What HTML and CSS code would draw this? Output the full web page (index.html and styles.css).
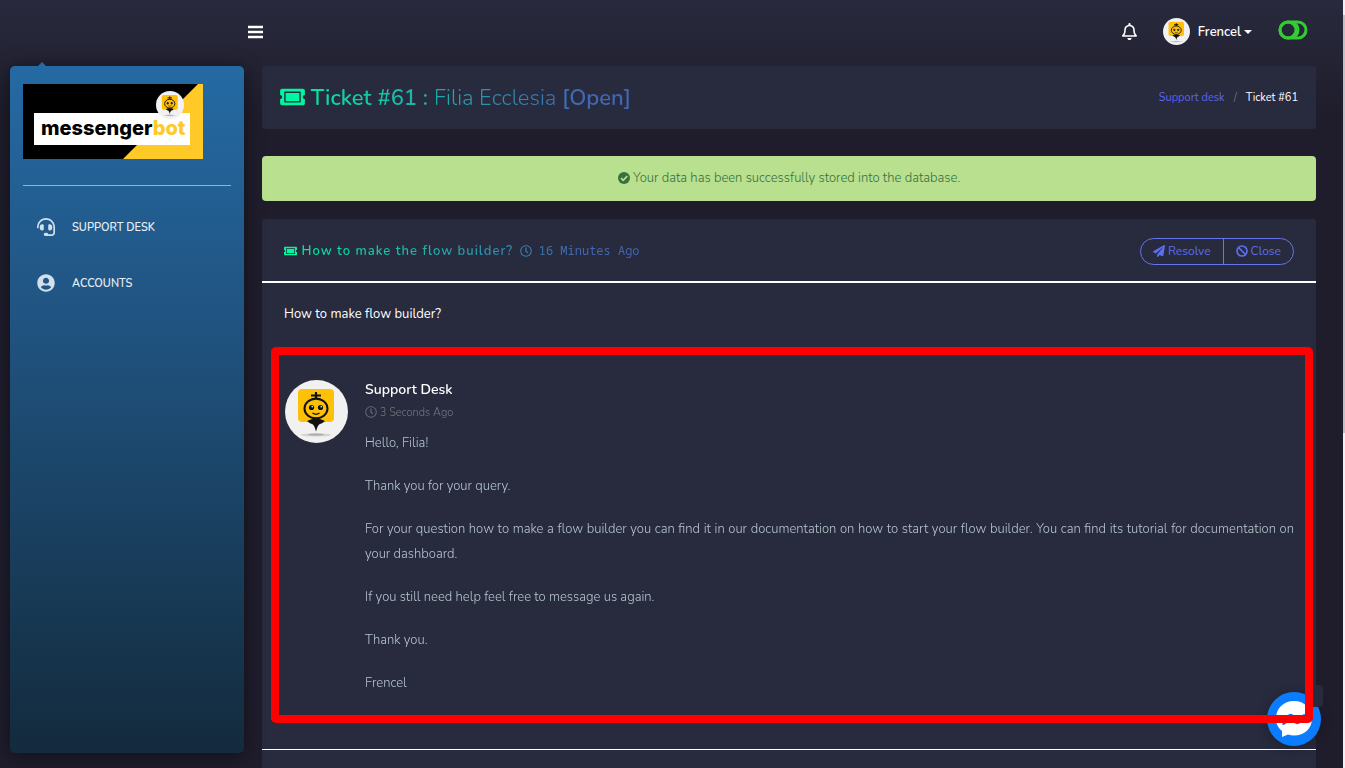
FILE: index.html
```html
<!DOCTYPE html>
<html lang="en">
<head>
    <meta charset="UTF-8">
    <meta name="viewport" content="width=device-width, initial-scale=1.0">
    <title>Ticket #61</title>
    <link rel="stylesheet" href="styles.css">
</head>
<body>
    <!-- shared shapes -->
    <svg class="defs" aria-hidden="true">
        <symbol id="bot" viewBox="0 0 63 63">
            <circle cx="31.5" cy="31.5" r="31.5" fill="#f1f1f2"/>
            <ellipse cx="31" cy="55" rx="15" ry="1.6" fill="#d4d4d4"/>
            <ellipse cx="31" cy="54.5" rx="8" ry="1" fill="#aaa"/>
            <rect x="13" y="9" width="36" height="33" rx="4" fill="#ffc107"/>
            <path d="M31 12v7M26 15.500h10" stroke="#111" stroke-width="2.200" fill="none"/>
            <path d="M25 19.500q6-4 12 0z" fill="#111"/>
            <ellipse cx="31" cy="28.500" rx="11.500" ry="9.800" fill="#ffc107" stroke="#111" stroke-width="2"/>
            <circle cx="26.500" cy="27.500" r="2.600" fill="#111"/>
            <circle cx="35.500" cy="27.500" r="2.600" fill="#111"/>
            <circle cx="27.200" cy="26.800" r=".8" fill="#fff"/>
            <circle cx="36.200" cy="26.800" r=".8" fill="#fff"/>
            <path d="M27.500 33q3.500 2.600 7 0" stroke="#111" stroke-width="1.300" fill="none"/>
            <path d="M22 41q4-2.500 9-2.500t9 2.500q-3 3-6 3.500-2 2-3 7-1-5-3-7-3-.5-6-3.500z" fill="#111"/>
        </symbol>
        <symbol id="ticket" viewBox="0 0 576 512">
            <path d="M128 160h320v192H128V160zm400 96c0 26.510 21.490 48 48 48v96c0 26.510-21.490 48-48 48H48c-26.510 0-48-21.490-48-48v-96c26.510 0 48-21.490 48-48s-21.490-48-48-48v-96c0-26.510 21.490-48 48-48h480c26.510 0 48 21.490 48 48v96c-26.510 0-48 21.490-48 48zm-48-104c0-13.255-10.745-24-24-24H120c-13.255 0-24 10.745-24 24v208c0 13.255 10.745 24 24 24h336c13.255 0 24-10.745 24-24V152z"/>
        </symbol>
        <symbol id="clock" viewBox="0 0 512 512">
            <path d="M256 8C119 8 8 119 8 256s111 248 248 248 248-111 248-248S393 8 256 8zm0 448c-110.500 0-200-89.500-200-200S145.500 56 256 56s200 89.500 200 200-89.500 200-200 200zm61.800-104.400l-84.900-61.700c-3.100-2.300-4.900-5.900-4.900-9.700V116c0-6.600 5.400-12 12-12h32c6.600 0 12 5.400 12 12v141.700l66.800 48.600c5.400 3.900 6.500 11.400 2.600 16.800L334.600 349c-3.900 5.300-11.400 6.500-16.800 2.600z"/>
        </symbol>
    </svg>

    <div class="page">
        <aside class="sidebar">
            <a class="logo" href="#" aria-label="messengerbot">
                <svg width="180" height="75" viewBox="0 0 180 75">
                    <path d="M0 0h180v75H0z"/>
                    <path d="M175 0h5v75h-80z" fill="#ffc928"/>
                    <path d="M11 29h156v32H11z" fill="#fff"/>
                    <text class="logo-text" x="18" y="51">messenger<tspan fill="#ffc928">bot</tspan></text>
                    <use href="#bot" x="133" y="7" width="28" height="28"/>
                </svg>
            </a>
            <nav class="menu">
                <a href="#">
                    <svg class="menu-icon" viewBox="0 0 512 512"><path d="M192 208c0-17.670-14.330-32-32-32h-16c-35.350 0-64 28.650-64 64v48c0 35.350 28.650 64 64 64h16c17.670 0 32-14.330 32-32V208zm176 144c35.350 0 64-28.650 64-64v-48c0-35.350-28.650-64-64-64h-16c-17.670 0-32 14.330-32 32v112c0 17.670 14.330 32 32 32h16zM256 0C113.180 0 4.580 118.830 0 256v16c0 8.840 7.160 16 16 16h16c8.840 0 16-7.160 16-16v-16c0-114.690 93.310-208 208-208s208 93.310 208 208h-.12c.08 2.430.12 165.720.12 165.720 0 23.350-18.930 42.280-42.280 42.280H320c0-26.510-21.490-48-48-48h-32c-26.510 0-48 21.490-48 48s21.490 48 48 48h181.720c49.860 0 90.280-40.420 90.280-90.280V256C507.420 118.830 398.820 0 256 0z"/></svg>
                    <span>SUPPORT DESK</span>
                </a>
                <a href="#">
                    <svg class="menu-icon" viewBox="0 0 496 512"><path d="M248 8C111 8 0 119 0 256s111 248 248 248 248-111 248-248S385 8 248 8zm0 96c48.600 0 88 39.400 88 88s-39.400 88-88 88-88-39.400-88-88 39.400-88 88-88zm0 344c-58.700 0-111.300-26.600-146.500-68.200 18.800-35.400 55.600-59.800 98.500-59.800 2.400 0 4.800.4 7.100 1.100 13 4.200 26.600 6.900 40.900 6.900s28-2.700 40.900-6.900c2.300-.7 4.700-1.100 7.100-1.100 42.900 0 79.700 24.400 98.500 59.800C359.300 421.400 306.700 448 248 448z"/></svg>
                    <span>ACCOUNTS</span>
                </a>
            </nav>
        </aside>

        <main class="content">
            <header class="topbar">
                <button class="icon-btn" type="button" aria-label="Toggle menu">
                    <svg width="16" height="16" viewBox="0 0 16 16"><path d="M1 3h15M1 8h15M1 13h15" stroke="#fff" stroke-width="2.600"/></svg>
                </button>
                <div class="topbar-right">
                    <button class="icon-btn" type="button" aria-label="Notifications">
                        <svg width="15" height="17" viewBox="0 0 448 512" fill="#fff"><path d="M439.390 362.290c-19.320-20.760-55.470-51.990-55.470-154.290 0-77.700-54.480-139.900-127.940-155.160V32c0-17.670-14.320-32-31.980-32s-31.980 14.330-31.980 32v20.840C118.560 68.100 64.080 130.300 64.080 208c0 102.300-36.150 133.530-55.470 154.290-6 6.450-8.660 14.160-8.610 21.710.11 16.400 12.980 32 32.100 32h383.800c19.120 0 32-15.600 32.100-32 .05-7.550-2.610-15.270-8.610-21.710zM67.530 368c21.220-27.970 44.420-74.330 44.530-159.420 0-.2-.06-.38-.06-.58 0-61.860 50.140-112 112-112s112 50.140 112 112c0 .2-.06.380-.06.58.11 85.100 23.310 131.460 44.530 159.420H67.530zM224 512c35.320 0 63.970-28.650 63.970-64H160.030c0 35.350 28.650 64 63.970 64z"/></svg>
                    </button>
                    <button class="user" type="button">
                        <svg width="27" height="27"><use href="#bot"/></svg>
                        <span>Frencel</span>
                    </button>
                    <button class="icon-btn switch" type="button" aria-label="Switch theme">
                        <svg width="30" height="20" viewBox="0 0 30 20" fill="none" stroke="#32cd32" stroke-width="3"><rect x="2" y="2" width="26" height="16" rx="8"/><circle cx="10" cy="10" r="8"/><path d="M16 3a8 8 0 0 1 0 14" stroke-width="2.600"/></svg>
                    </button>
                </div>
            </header>

            <section class="section-header">
                <h1 class="gradient">
                    <svg class="title-icon" width="25" height="22"><use href="#ticket"/></svg>
                    Ticket #61 : <span class="light">Filia Ecclesia</span> [Open]
                </h1>
                <nav class="breadcrumb">
                    <a href="#">Support desk</a>
                    <span class="slash">/</span>
                    <span>Ticket #61</span>
                </nav>
            </section>

            <div class="alert">
                <svg width="12" height="12" viewBox="0 0 12 12"><circle cx="6" cy="6" r="6" fill="#37703f"/><path d="M3 6.200l2.200 2.200 4-4.200" fill="none" stroke="#b8e08e" stroke-width="1.700"/></svg>
                Your data has been successfully stored into the database.
            </div>

            <section class="card">
                <div class="card-header">
                    <h2 class="gradient">
                        <svg class="title-icon" width="13" height="12"><use href="#ticket"/></svg>
                        How to make the flow builder?
                        <code><svg class="time-icon" width="12" height="12"><use href="#clock"/></svg> 16 Minutes Ago</code>
                    </h2>
                    <div class="btn-group">
                        <button type="button">
                            <svg width="12" height="12" viewBox="0 0 512 512"><path d="M476 3.200L12.500 270.600c-18.100 10.400-15.800 35.600 2.200 43.200L121 358.400l287.300-253.200c5.500-4.900 13.300 2.600 8.600 8.300L176 407v80.500c0 23.600 28.500 32.900 42.500 15.800L282 426l124.600 52.200c14.200 6 30.400-2.900 33-18.200l72-432C515 7.800 493.300-6.800 476 3.200z"/></svg>
                            Resolve
                        </button>
                        <button type="button">
                            <svg width="12" height="12" viewBox="0 0 12 12"><g fill="none" stroke="#5b6ff0" stroke-width="1.700"><circle cx="6" cy="6" r="5"/><path d="M2.500 2.500l7 7"/></g></svg>
                            Close
                        </button>
                    </div>
                </div>
                <p class="question">How to make flow builder?</p>

                <article class="reply">
                    <svg class="avatar" width="63" height="63"><use href="#bot"/></svg>
                    <div class="reply-body">
                        <h3>Support Desk</h3>
                        <div class="time"><svg width="12" height="12"><use href="#clock"/></svg> 3 Seconds Ago</div>
                        <p>Hello, Filia!</p>
                        <p>Thank you for your query.</p>
                        <p>For your question how to make a flow builder you can find it in our documentation on how to start your flow builder. You can find its tutorial for documentation on your dashboard.</p>
                        <p>If you still need help feel free to message us again.</p>
                        <p>Thank you.</p>
                        <p>Frencel</p>
                    </div>
                </article>
                <hr>
            </section>
        </main>
        <div class="scrollbar"></div>
    </div>

    <button class="chat" type="button" aria-label="Messenger chat">
        <svg width="54" height="54" viewBox="0 0 54 54"><circle cx="27" cy="27" r="27" fill="#0a7cff"/><path d="M27 9C16.500 9 9 16.500 9 26.500c0 5.500 2.300 9.500 6 12.500v6l6-2.500c2 .6 4 .9 6 .9 10.500 0 18-7.300 18-17S37.500 9 27 9z" fill="#fff"/><path d="M15 32l6-9q2-2 4-1l5 4 7-4q2 0 1 2l-5 7q-2 2-4 1l-5-4-7 5q-2 0-2-1z" fill="#0a7cff"/></svg>
    </button>
    <div class="chat-tab"></div>
</body>
</html>
```
FILE: styles.css
```css
* {
    box-sizing: border-box;
}
body {
    margin: 0;
    height: 100vh;
    overflow: hidden;
    background: linear-gradient(#282a3d, #1f1d2c 115px);
    color: #fff;
    font-family: Nunito, Lato, sans-serif;
    font-size: 13px;
}
button {
    margin: 0;
    padding: 0;
    border: 0;
    background: none;
    color: inherit;
    font: inherit;
    cursor: pointer;
}
a {
    color: inherit;
    text-decoration: none;
}
svg {
    flex: none;
}
.defs {
    position: absolute;
    width: 0;
    height: 0;
}
.page {
    display: grid;
    grid-template-columns: 234px 1fr 2px;
    height: 100vh;
    padding-left: 10px;
}

/* sidebar */
.sidebar {
    position: relative;
    margin: 66px 0 15px;
    padding: 18px 13px;
    border-radius: 5px;
    background: linear-gradient(#256aa4, #205380 38%, #16364f 83%, #142a3d);
    box-shadow: 0 2px 18px rgba(0, 0, 0, 0.5);
}
.sidebar::before {
    content: "";
    position: absolute;
    top: -4px;
    left: 28px;
    border: 4px solid transparent;
    border-top: 0;
    border-bottom-color: #256aa4;
}
.logo {
    display: block;
    padding-bottom: 26px;
    border-bottom: 1px solid #8fb4d0;
}
.logo svg {
    display: block;
}
.logo-text {
    font: 800 20px Inter, sans-serif;
}
.menu {
    padding-top: 13px;
}
.menu a {
    display: flex;
    align-items: center;
    gap: 17px;
    height: 56px;
    padding-left: 14px;
    font-size: 11px;
    font-weight: 600;
    color: #e6eef4;
}
.menu-icon {
    width: 18px;
    height: 18px;
    fill: #d3e0ea;
}

/* top bar */
.content {
    display: flex;
    flex-direction: column;
    min-width: 0;
    height: 100vh;
    padding: 0 27px 0 18px;
}
.topbar {
    display: flex;
    flex: none;
    justify-content: space-between;
    align-items: center;
    height: 66px;
    margin: 0 8px 0 -15px;
    padding-bottom: 3px;
}
.icon-btn svg {
    display: block;
}
.topbar-right {
    display: flex;
    align-items: center;
    gap: 26px;
}
.switch {
    padding-bottom: 4px;
}
.user {
    display: flex;
    align-items: center;
    gap: 8px;
    font-weight: 600;
}
.user::after {
    content: "";
    margin-left: -5px;
    border: 4px solid transparent;
    border-top-color: #fff;
    border-bottom: 0;
}

/* page heading */
.section-header {
    display: flex;
    flex: none;
    justify-content: space-between;
    align-items: center;
    height: 63px;
    padding: 0 18px;
    border-radius: 3px;
    background: #282a3d;
}
.gradient {
    margin: 0;
    background: linear-gradient(to right, #00f2a0, #4267b2 85%);
    background-clip: text;
    -webkit-background-clip: text;
    color: transparent;
}
.section-header h1 {
    font-size: 22px;
    font-weight: 600;
    line-height: 32px;
}
.light {
    font-weight: 300;
}
.title-icon {
    fill: #00f79f;
    vertical-align: -3px;
}
.breadcrumb {
    display: flex;
    gap: 9px;
    font-size: 11px;
}
.breadcrumb a {
    color: #5b63ee;
}
.slash {
    color: #6c757d;
}
.alert {
    flex: none;
    margin: 27px 0 18px;
    border-radius: 4px;
    background: #b8e08e;
    color: #37703f;
    font-weight: 300;
    line-height: 45px;
    text-align: center;
}
.alert svg {
    vertical-align: -2px;
}

/* ticket */
.card {
    flex: 1 0 auto;
    border-radius: 3px 3px 0 0;
    background: #282a3d;
}
.card-header {
    display: flex;
    justify-content: space-between;
    align-items: center;
    height: 64px;
    padding: 2px 22px 0;
    border-bottom: 2px solid #fff;
}
.card-header h2 {
    font-size: 13px;
    font-weight: 600;
    line-height: 24px;
    letter-spacing: 1px;
}
.card-header .title-icon {
    vertical-align: -2px;
}
.card-header code {
    margin-left: 2px;
    font-family: "Noto Sans Mono", "Liberation Mono", monospace;
    font-size: 12px;
    font-weight: 400;
    letter-spacing: normal;
}
.time-icon {
    fill: #3d7aa8;
    vertical-align: -2px;
}
.btn-group {
    display: flex;
    height: 27px;
    border: 1px solid #6576ea;
    border-radius: 14px;
    color: #5b6ff0;
    font-size: 12px;
}
.btn-group button {
    display: flex;
    align-items: center;
    gap: 3px;
    padding: 0 12px;
}
.btn-group button + button {
    border-left: 1px solid #6576ea;
}
.btn-group svg {
    fill: #5b6ff0;
}
.question {
    margin: 0;
    padding: 19px 22px 20px;
    line-height: 25px;
}
.reply {
    position: relative;
    z-index: 2;
    display: flex;
    gap: 17px;
    margin: 0 3px 0 9px;
    padding: 25px 11px 19px 6px;
    border: 8px solid #f00;
    border-radius: 5px;
}
.reply-body {
    color: #b4c5cc;
    font-weight: 300;
    line-height: 25px;
}
.reply h3 {
    margin: 0;
    color: #fff;
    font-size: 14px;
    font-weight: 600;
    line-height: 20px;
}
.time {
    margin-bottom: 6px;
    color: #757780;
    font-size: 11px;
}
.time svg {
    fill: #5f626c;
    vertical-align: -2px;
}
.reply p {
    margin: 0 0 18px;
    text-align: justify;
}
.reply p:last-child {
    margin-bottom: 0;
}
hr {
    margin: 26px 0 0;
    border: 0;
    border-top: 1px solid #fff;
}

/* browser edge and chat bubble */
.scrollbar {
    background: linear-gradient(#f1f1f1 15px, #c1c1c1 15px, #c1c1c1 433px, #f1f1f1 433px);
}
.chat {
    position: fixed;
    right: 24px;
    bottom: 22px;
    z-index: 1;
    height: 54px;
    border-radius: 50%;
    box-shadow: 0 2px 12px rgba(0, 0, 0, 0.25);
}
.chat svg {
    display: block;
}
.chat-tab {
    position: fixed;
    right: 22px;
    bottom: 61px;
    z-index: 1;
    width: 14px;
    height: 22px;
    border-radius: 4px;
    background: #282a3d;
}
```
